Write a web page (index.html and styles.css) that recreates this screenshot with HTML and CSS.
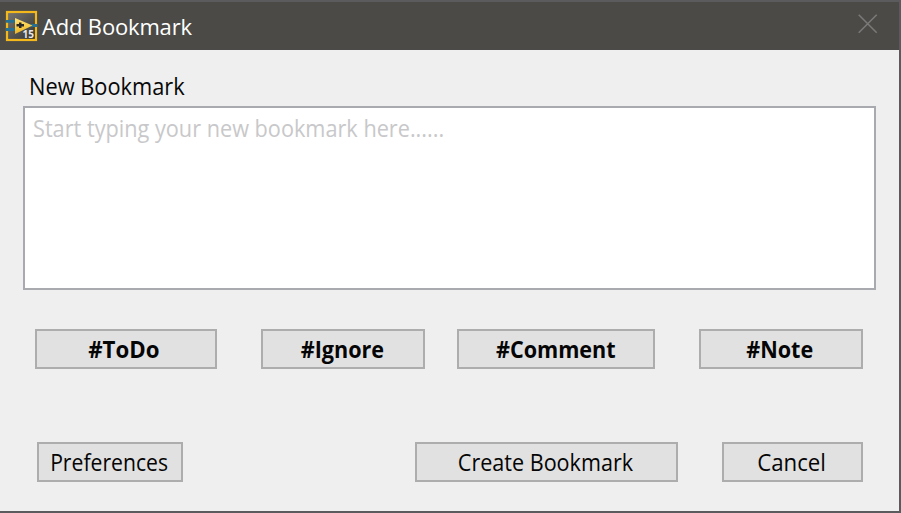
FILE: index.html
```html
<!DOCTYPE html>
<html lang="en">
<head>
<meta charset="utf-8">
<title>Add Bookmark</title>
<link rel="stylesheet" href="styles.css">
</head>
<body>
<main class="window">
  <header class="titlebar">
    <svg class="app-icon" viewBox="0 0 34 34" aria-hidden="true">
      <defs><linearGradient id="face" x1="0" y1="0" x2="1" y2="1"><stop offset="0" stop-color="#777672"/><stop offset="1" stop-color="#343432"/></linearGradient>
      <linearGradient id="arrow" x1="0" y1="0" x2="0" y2="1"><stop offset="0" stop-color="#ffe477"/><stop offset="1" stop-color="#efb51d"/></linearGradient></defs>
      <rect x="2" y="4" width="29" height="28" fill="url(#face)" stroke="#f2b81c" stroke-width="2.2"/>
      <path d="M1 13.3H10M1 21.5H10M26 17.5H32" stroke="#246f94" stroke-width="2.8" fill="none"/>
      <path d="M10 10L27.5 17.5L10 26Z" fill="url(#arrow)"/>
      <path d="M11.5 16H14V14.5H16.5V16H19V18.5H16.5V20H14V18.5H11.5Z" fill="#292a27"/>
      <text x="17.5" y="29.5" class="icon-version">15</text>
    </svg>
    <h1 class="title">Add Bookmark</h1>
    <svg class="close" viewBox="0 0 20 20" aria-label="Close"><path d="M0.7 0.7L18.7 18.7M18.7 0.7L0.7 18.7"/></svg>
  </header>
  <section class="content">
    <label class="label" for="bookmark">New Bookmark</label>
    <div class="field" id="bookmark"><span class="hint">Start typing your new bookmark here......</span></div>
    <div class="tags">
      <button class="tag"><span class="wide">#ToDo</span></button>
      <button class="tag"><span>#Ignore</span></button>
      <button class="tag"><span>#Comment</span></button>
      <button class="tag"><span>#Note</span></button>
    </div>
    <div class="actions">
      <button><span class="narrow">Preferences</span></button>
      <button class="create"><span>Create Bookmark</span></button>
      <button class="cancel"><span class="wide">Cancel</span></button>
    </div>
  </section>
</main>
</body>
</html>
```
FILE: styles.css
```css
* { box-sizing: border-box; }
body { margin: 0; font-family: "Open Sans", sans-serif; background: #efefef; }
.window { width: 901px; height: 513px; background: #efefef; border: solid #5b5a5c; border-width: 2px 2px 2px 0; overflow: hidden; }
.titlebar { height: 48px; background: #4b4a47; display: flex; align-items: flex-start; padding: 6px 21px 0 5px; }
.app-icon { width: 34px; height: 34px; flex: none; }
.icon-version { font: bold 10px "Open Sans", sans-serif; fill: #e8e8e8; }
.title { margin: 3px 0 0 3px; color: #fff; font-size: 22px; font-weight: 400; line-height: 30px; letter-spacing: -0.17px; white-space: nowrap; }
.close { width: 20px; height: 20px; margin: 6px 0 0 auto; fill: none; stroke: #7b7977; stroke-width: 1.6; }
.content { padding: 20px 23px 0; }
.label { display: block; height: 36px; padding-left: 6px; font-size: 23px; line-height: 32px; color: #080808; white-space: nowrap; transform: scaleX(0.948); transform-origin: 6px 0; }
.field { width: 853px; height: 184px; border: 2px solid #a9aab0; background: #fff; padding: 4px 8px; }
.hint { display: inline-block; color: #c8c8ca; font-size: 23px; line-height: 33px; white-space: nowrap; transform: scaleX(0.943); transform-origin: left; }
.tags { display: flex; margin: 39px 0 0 12px; }
button { height: 40px; border: 2px solid #adadad; background: #e1e1e1; padding: 1px 0 0; color: #050505; font: 23px/35px "Open Sans", sans-serif; white-space: nowrap; border-radius: 0; flex: none; }
button span { display: inline-block; transform: scaleX(0.938); }
button .wide { transform: scaleX(0.968); }
button .narrow { transform: scaleX(0.92); }
.tag { font-weight: 700; width: 182px; padding-right: 4px; }
.tag:nth-child(2) { width: 164px; margin-left: 44px; padding-right: 2px; }
.tag:nth-child(3) { width: 198px; margin-left: 32px; padding-right: 1px; }
.tag:nth-child(4) { width: 164px; margin-left: 44px; padding-right: 3px; }
.actions { display: flex; margin: 73px 0 0 14px; }
.actions button { width: 146px; padding-right: 2px; }
.actions .create { width: 263px; margin-left: 232px; padding-right: 3px; }
.actions .cancel { width: 141px; margin-left: 44px; padding-right: 1px; }
```
